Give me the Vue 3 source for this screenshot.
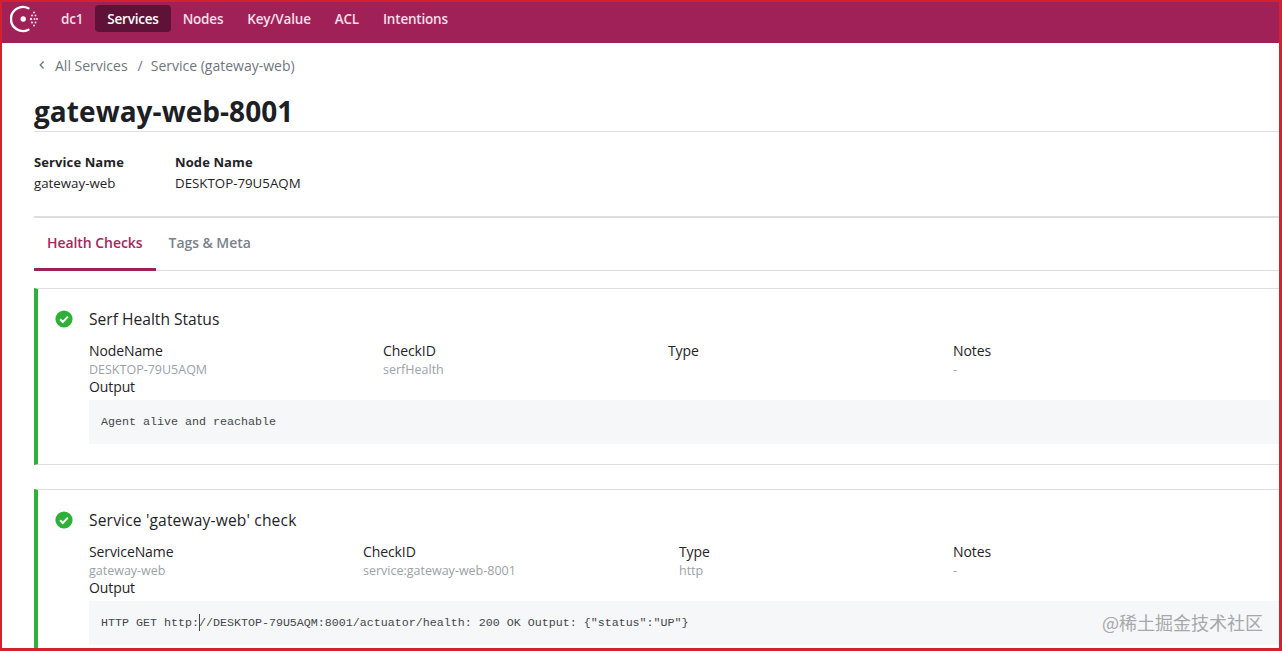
<template>
  <div class="frame">
    <header class="nav">
      <svg class="logo" width="30" height="30" viewBox="0 0 30 30">
        <path d="M18.4 4.3A12 12 0 1 0 18.4 25.7" fill="none" stroke="#fff" stroke-width="2.4" stroke-linecap="round" />
        <circle cx="13.2" cy="15" r="2.7" fill="#fff" />
        <circle v-for="(d, i) in logoDots" :key="i" :cx="d[0]" :cy="d[1]" :r="d[2]" fill="#f3d9e5" />
      </svg>
      <nav class="nav-items">
        <a v-for="item in navItems" :key="item" class="nav-item" :class="{ active: item === 'Services' }">{{ item }}</a>
      </nav>
    </header>

    <main class="content">
      <div class="crumbs">
        <svg width="8" height="10" viewBox="0 0 8 10"><path d="M5.6 1.5 2.2 5l3.4 3.5" fill="none" stroke="#6f7680" stroke-width="1.3" /></svg>
        <span class="crumb-link">All Services</span>
        <span class="crumb-sep">/</span>
        <span>Service (gateway-web)</span>
      </div>

      <h1 class="title">gateway-web-8001</h1>

      <div class="meta">
        <dl class="meta-col service">
          <dt>Service Name</dt>
          <dd>gateway-web</dd>
        </dl>
        <dl class="meta-col">
          <dt>Node Name</dt>
          <dd>DESKTOP-79U5AQM</dd>
        </dl>
      </div>

      <div class="tabs">
        <span class="tab active">Health Checks</span>
        <span class="tab">Tags &amp; Meta</span>
      </div>

      <section v-for="check in checks" :key="check.title" class="check" :class="check.kind">
        <svg class="ok" width="18" height="18" viewBox="0 0 18 18">
          <circle cx="9" cy="9" r="8.6" fill="#2eb039" />
          <path d="M5.1 9.3 7.8 12l5.1-5.4" fill="none" stroke="#fff" stroke-width="2" />
        </svg>
        <div class="check-body">
          <h2 class="check-title">{{ check.title }}</h2>
          <div class="fields">
            <div v-for="f in check.fields" :key="f[0]" class="field">
              <div class="field-label">{{ f[0] }}</div>
              <div class="field-value">{{ f[1] }}</div>
            </div>
          </div>
          <div class="field-label">Output</div>
          <pre class="output">{{ check.before }}<i v-if="check.after" class="caret"></i>{{ check.after }}</pre>
        </div>
      </section>
    </main>

    <div class="watermark">@稀土掘金技术社区</div>
  </div>
</template>

<script setup>
const navItems = ["dc1", "Services", "Nodes", "Key/Value", "ACL", "Intentions"]

const logoDots = [
  [21, 15, 1.2], [24.5, 15, 1.1], [27, 15, 1],
  [22, 11.5, 1.1], [25.5, 11.5, 1], [22, 18.5, 1.1], [25.5, 18.5, 1],
  [24, 8.5, 1], [24, 21.5, 1]
]

const checks = [
  {
    kind: "first",
    title: "Serf Health Status",
    fields: [["NodeName", "DESKTOP-79U5AQM"], ["CheckID", "serfHealth"], ["Type", ""], ["Notes", "-"]],
    before: "Agent alive and reachable",
    after: ""
  },
  {
    kind: "second",
    title: "Service 'gateway-web' check",
    fields: [["ServiceName", "gateway-web"], ["CheckID", "service:gateway-web-8001"], ["Type", "http"], ["Notes", "-"]],
    before: "HTTP GET http:",
    after: '//DESKTOP-79U5AQM:8001/actuator/health: 200 OK Output: {"status":"UP"}'
  }
]
</script>

<style>
html, body {
  margin: 0;
  background: #fff;
}
</style>

<style scoped>
.frame {
  position: relative;
  box-sizing: border-box;
  width: 1282px;
  height: 651px;
  border: 2px solid #d3212f;
  border-right-width: 3px;
  border-bottom-width: 3px;
  overflow: hidden;
  font-family: "Open Sans", "Noto Sans", sans-serif;
  font-size: 13px;
  color: #1f2328;
}
.nav {
  display: flex;
  height: 41px;
  background: #a02157;
}
.logo {
  margin: 2px 0 0 8px;
}
.nav-items {
  display: flex;
  align-items: flex-start;
  margin: 3px 0 0 9px;
}
.nav-item {
  height: 27px;
  padding: 0 12px;
  border-radius: 4px;
  line-height: 28px;
  font-size: 13.5px;
  font-weight: 600;
  letter-spacing: -0.2px;
  color: #f6dfe9;
}
.nav-item.active {
  background: #5e1238;
  color: #fff;
}
.content {
  padding-left: 32px;
}
.crumbs {
  display: flex;
  align-items: center;
  box-sizing: border-box;
  height: 46px;
  padding: 0 0 2px 4px;
  color: #6f7680;
  font-size: 14px;
  font-weight: 500;
}
.crumb-link {
  margin-left: 9px;
}
.crumb-sep {
  margin: 0 8px 0 10px;
}
.title {
  margin: 0;
  height: 42px;
  border-bottom: 1px solid #dcdee0;
  font-size: 28px;
  line-height: 45px;
  font-weight: 700;
  letter-spacing: 0.05px;
  color: #1c2025;
}
.meta {
  display: flex;
  height: 86px;
  border-bottom: 2px solid #dcdee0;
  padding-top: 20px;
  box-sizing: border-box;
}
.meta-col {
  margin: 0;
  line-height: 21px;
}
.meta-col.service {
  width: 141px;
}
.meta-col dt {
  font-weight: 700;
  letter-spacing: 0.1px;
}
.meta-col dd {
  margin: 0;
  font-size: 13.3px;
}
.tabs {
  display: flex;
  height: 53px;
  border-bottom: 1px solid #dcdee0;
  box-sizing: border-box;
}
.tab {
  height: 53px;
  box-sizing: border-box;
  padding: 0 13px;
  line-height: 50px;
  font-size: 14px;
  font-weight: 600;
  letter-spacing: -0.06px;
  color: #7a818a;
}
.tab.active {
  color: #9e2a5c;
  border-bottom: 3px solid #9e2159;
}
.check {
  display: flex;
  margin-top: 17px;
  border-top: 1px solid #dcdee0;
  border-bottom: 1px solid #dcdee0;
  border-left: 4px solid #2eb039;
  height: 175px;
}
.check.second {
  margin-top: 24px;
}
.ok {
  margin: 21px 0 0 17px;
}
.check-body {
  flex: 1;
  margin-left: 16px;
  padding-top: 19px;
}
.check-title {
  margin: 0 0 12px;
  font-size: 15.6px;
  line-height: 22px;
  font-weight: 500;
}
.second .check-title {
  letter-spacing: 0.15px;
}
.fields {
  display: grid;
}
.first .fields {
  grid-template-columns: 294px 285px 285px 1fr;
}
.second .fields {
  grid-template-columns: 274px 316px 274px 1fr;
}
.field-label {
  line-height: 18px;
  font-size: 14px;
  letter-spacing: -0.1px;
}
.field-value {
  height: 18px;
  line-height: 20px;
  font-size: 12.5px;
  color: #9ba1a8;
}
.output {
  margin: 4px 0 0;
  height: 44px;
  padding-left: 12px;
  line-height: 44px;
  background: #f6f7f8;
  font-family: "Liberation Mono", monospace;
  font-size: 11.67px;
  color: #42474d;
}
.caret {
  display: inline-block;
  width: 1px;
  height: 17px;
  margin-right: -1px;
  vertical-align: middle;
  background: #42474d;
}
.watermark {
  position: absolute;
  right: 16px;
  bottom: 14px;
  font-family: "Noto Sans CJK SC", sans-serif;
  font-size: 18px;
  line-height: 24px;
  color: #a6a8ab;
}
</style>
